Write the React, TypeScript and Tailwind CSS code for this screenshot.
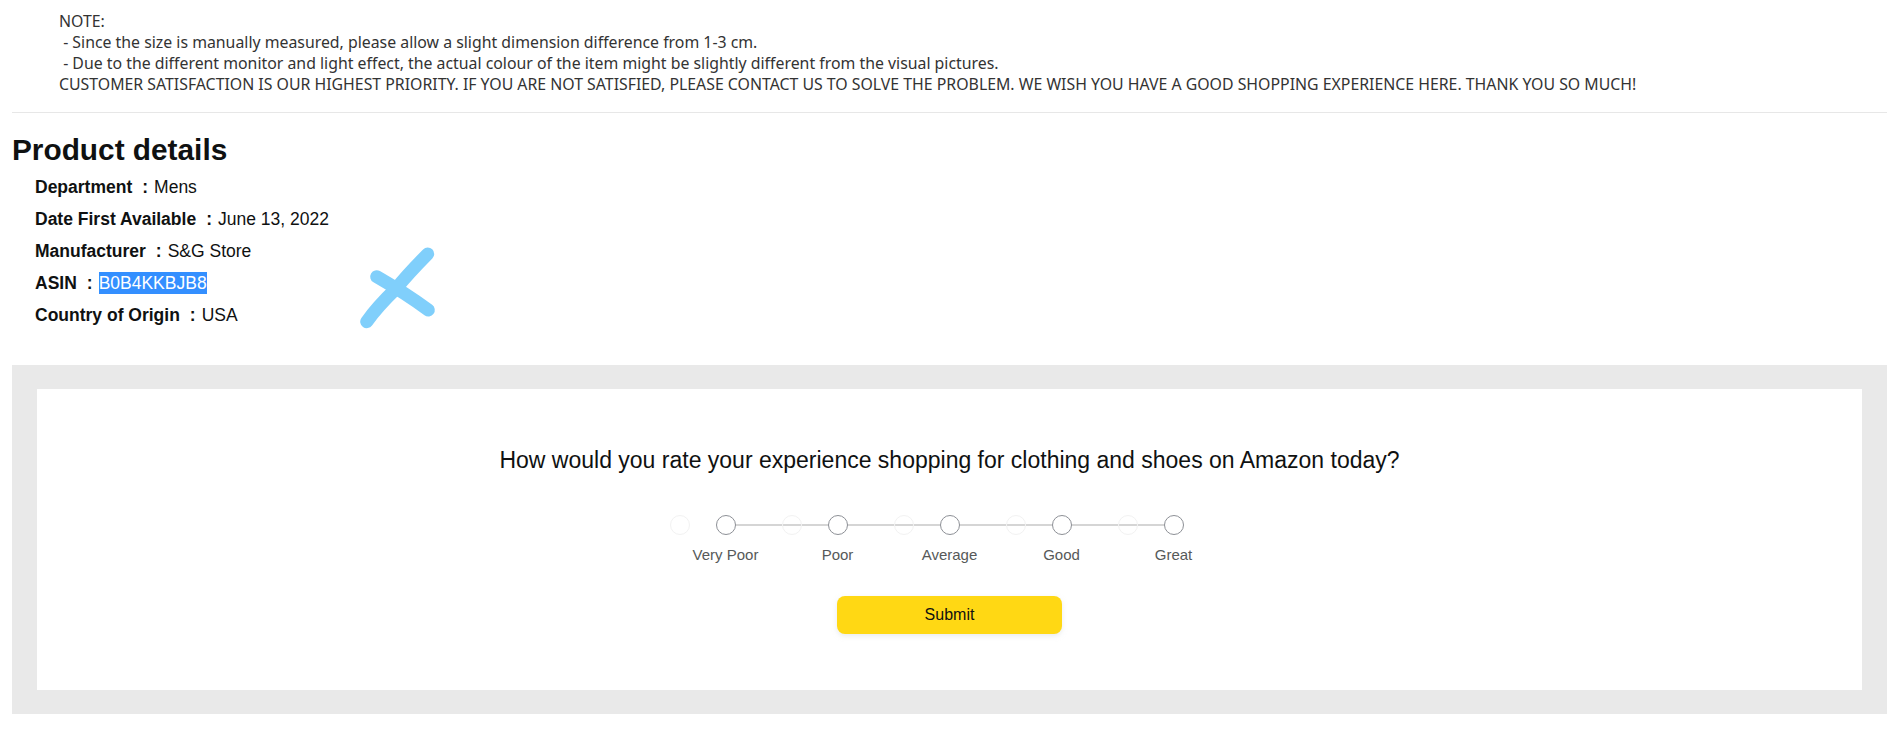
import React from "react";

const details: [string, string][] = [
  ["Department", "Mens"],
  ["Date First Available", "June 13, 2022"],
  ["Manufacturer", "S&G Store"],
  ["ASIN", "B0B4KKBJB8"],
  ["Country of Origin", "USA"],
];

const ratings = ["Very Poor", "Poor", "Average", "Good", "Great"];

export default function App() {
  return (
    <div className="relative w-full bg-white text-[#0f1111] font-['Liberation_Sans',Arial,sans-serif]">
      <div className="pl-[59px] pt-[11px] pb-[17px] text-[15.85px] leading-[21px] text-[#333333] whitespace-pre-wrap font-['Noto_Sans','Liberation_Sans',sans-serif]">
        <div>NOTE:</div>
        <div> - Since the size is manually measured, please allow a slight dimension difference from 1-3 cm.</div>
        <div> - Due to the different monitor and light effect, the actual colour of the item might be slightly different from the visual pictures.</div>
        <div>CUSTOMER SATISFACTION IS OUR HIGHEST PRIORITY. IF YOU ARE NOT SATISFIED, PLEASE CONTACT US TO SOLVE THE PROBLEM. WE WISH YOU HAVE A GOOD SHOPPING EXPERIENCE HERE. THANK YOU SO MUCH!</div>
      </div>
      <div className="mx-[12px] h-px bg-[#e7e7e7]" />

      <div className="px-[12px] pt-[19px]">
        <h2 className="text-[29.8px] leading-[36px] font-bold text-[#0f1111]">Product details</h2>
        <ul className="pl-[23px] pt-[3px]">
          {details.map(([k, v]) => (
            <li key={k} className="h-[32px] leading-[32px] text-[17.5px] whitespace-pre">
              <span className="font-bold">{k}</span>
              <span className="font-bold ml-[10px] mr-[6px]">:</span>
              {k === "ASIN" ? (
                <span className="inline-block h-[22px] leading-[22px] bg-[#338fff] text-white">{v}</span>
              ) : (
                <span>{v}</span>
              )}
            </li>
          ))}
        </ul>
      </div>

      <svg
        className="absolute left-[355px] top-[245px]"
        width="85"
        height="90"
        viewBox="0 0 85 90"
        fill="none"
      >
        <path d="M72.7 9 Q52 30 41.7 43 Q22 62 11.7 76.7" stroke="#80cffb" strokeWidth="13" strokeLinecap="round" />
        <path d="M21.7 31.7 Q50 48 73.3 65" stroke="#80cffb" strokeWidth="13" strokeLinecap="round" />
      </svg>

      <div className="mx-[12px] mt-[34px] bg-[#e9e9e9] pt-[24px] pb-[24px] px-[25px]">
        <div className="h-[301px] bg-white flex flex-col items-center pt-[57px]">
          <div className="text-[23px] leading-[28px] text-[#0f1111]">
            How would you rate your experience shopping for clothing and shoes on Amazon today?
          </div>
          <div className="relative mt-[41px] flex w-[560px]">
            <div className="absolute left-[56px] right-[56px] top-[9px] h-[2px] bg-[#d5d5d5]" />
            {ratings.map((r) => (
              <div key={r} className="relative flex w-[112px] flex-col items-center">
                <div className="absolute left-[0px] top-0 h-[20px] w-[20px] rounded-full border border-[#f2f2f2]" />
                <div className="relative h-[20px] w-[20px] rounded-full border-[1.5px] border-[#8d9096] bg-white" />
                <div className="mt-[10px] text-[15px] leading-[20px] text-[#565959]">{r}</div>
              </div>
            ))}
          </div>
          <button className="mt-[31px] h-[38px] w-[225px] rounded-[8px] bg-[#ffd814] text-[16px] text-[#0f1111] shadow-[0_2px_5px_0_rgba(213,217,217,0.5)]">
            Submit
          </button>
        </div>
      </div>
      <div className="h-[27px]" />
    </div>
  );
}
